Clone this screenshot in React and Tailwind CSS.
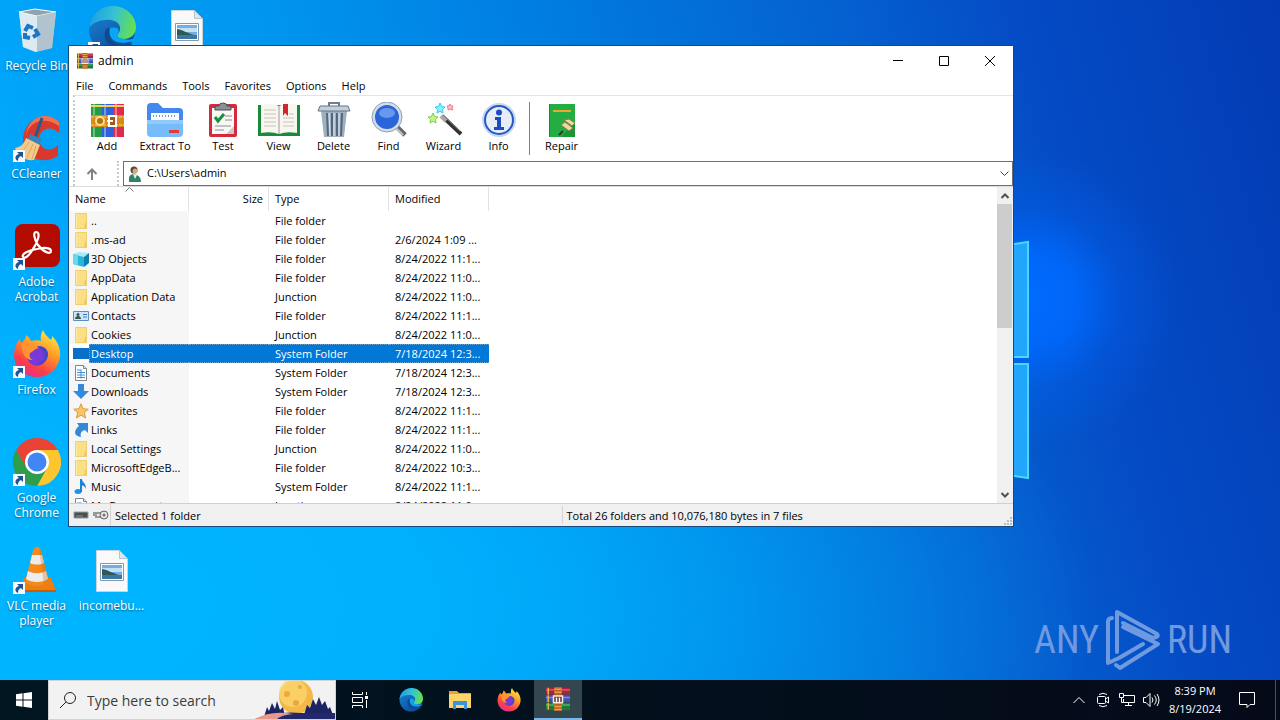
import React from 'react';

const files = [
  { name: '..', icon: 'folder', type: 'File folder', modified: '' },
  { name: '.ms-ad', icon: 'folder', type: 'File folder', modified: '2/6/2024 1:09 ...' },
  { name: '3D Objects', icon: 'cube', type: 'File folder', modified: '8/24/2022 11:1...' },
  { name: 'AppData', icon: 'folder', type: 'File folder', modified: '8/24/2022 11:0...' },
  { name: 'Application Data', icon: 'folder', type: 'Junction', modified: '8/24/2022 11:0...' },
  { name: 'Contacts', icon: 'contacts', type: 'File folder', modified: '8/24/2022 11:1...' },
  { name: 'Cookies', icon: 'folder', type: 'Junction', modified: '8/24/2022 11:0...' },
  { name: 'Desktop', icon: 'desktop', type: 'System Folder', modified: '7/18/2024 12:3...', selected: true },
  { name: 'Documents', icon: 'documents', type: 'System Folder', modified: '7/18/2024 12:3...' },
  { name: 'Downloads', icon: 'downloads', type: 'System Folder', modified: '7/18/2024 12:3...' },
  { name: 'Favorites', icon: 'favorites', type: 'File folder', modified: '8/24/2022 11:1...' },
  { name: 'Links', icon: 'links', type: 'File folder', modified: '8/24/2022 11:1...' },
  { name: 'Local Settings', icon: 'folder', type: 'Junction', modified: '8/24/2022 11:0...' },
  { name: 'MicrosoftEdgeB...', icon: 'folder', type: 'File folder', modified: '8/24/2022 10:3...' },
  { name: 'Music', icon: 'music', type: 'System Folder', modified: '8/24/2022 11:1...' },
  { name: 'My Documents', icon: 'documents', type: 'Junction', modified: '8/24/2022 11:0...' },
];

const menus = ['File', 'Commands', 'Tools', 'Favorites', 'Options', 'Help'];

/* ---------- Row icons ---------- */

const rowIcons = {
  folder: (
    <>
      <path d="M2 0h12v16H2z" fill="#fbdf84" />
      <path d="M2 0h2v16H2z" fill="#fdeaa6" />
      <path d="M12 10l2-1v7h-3z" fill="#efc65a" />
      <path d="M2.5.5h11v15h-11z" fill="none" stroke="#efcf70" />
    </>
  ),
  cube: (
    <>
      <path d="M0 3l6-2 10 1-5 4z" fill="#a5ebf5" />
      <path d="M0 3l11 3v10L0 13z" fill="#28b5d8" />
      <path d="M11 6l5-4v10l-5 4z" fill="#0b7fae" />
      <path d="M0 3l5 1v10l-5-1z" fill="#6bd8ea" />
    </>
  ),
  contacts: (
    <>
      <path d="M.5 3.500h15v9H.5z" fill="#cfe6fa" stroke="#5b8fc4" />
      <circle cx="5" cy="6.500" r="1.500" fill="#34564e" />
      <path d="M2 11c0-4 6-4 6 0z" fill="#34564e" />
      <path d="M10 6.500h4M10 9h4" stroke="#3a78bd" />
    </>
  ),
  desktop: <path d="M0 2h16v11H0z" fill="#0a6fc9" />,
  documents: (
    <>
      <path d="M2.500.5h8l3 3v12h-11z" fill="#fff" stroke="#7b8791" />
      <path d="M10.500.5v3h3" fill="#dde6ee" stroke="#7b8791" />
      <path d="M4 5h4M4 7.500h8M4 10h8M4 12.500h8" stroke="#3d8fd6" />
      <path d="M8 4.500v9" stroke="#3d8fd6" />
    </>
  ),
  downloads: <path d="M5 0h6v7h5l-8 8-8-8h5z" fill="#3389dc" />,
  favorites: (
    <path
      d="M8 .8l2 5 5.300.4-4 3.500 1.300 5.300L8 12.200 3.400 15l1.300-5.300-4-3.500L6 5.800z"
      fill="#fbc565"
      stroke="#dc9a3d"
    />
  ),
  links: <path d="M4 1h11v10l-3-3c-4 1-5 4-4 7-7-1-8-6-2-11z" fill="#3488d8" />,
  music: (
    <>
      <ellipse cx="5" cy="12.500" rx="3.500" ry="2.500" fill="#1a93ec" />
      <path d="M7 0h2c0 4 5 4 3.500 10C12 7 10 6.500 9 6.500V13H7z" fill="#1a83dc" />
    </>
  ),
};

const RowIcon = ({ kind }) => (
  <svg viewBox="0 0 16 16" className="w-4 h-4 shrink-0">
    {rowIcons[kind]}
  </svg>
);

/* ---------- Application icons ---------- */

const WinRarIcon = ({ className }) => (
  <svg viewBox="0 0 32 32" className={className}>
    <path d="M0 1h32v9H0z" fill="#a8233c" />
    <path d="M0 11h32v9H0z" fill="#4050b8" />
    <path d="M0 21h32v10H0z" fill="#1f7a35" />
    <path d="M0 4h32" stroke="#db5570" strokeWidth="2" />
    <path d="M0 14h32" stroke="#7a8ae4" strokeWidth="2" />
    <path d="M0 24h32" stroke="#4ab766" strokeWidth="2" />
    <path d="M3 1v30" stroke="#e4b440" strokeWidth="2" strokeDasharray="9 1" />
    <path d="M11 0h10v32H11z" fill="#b8602c" />
    <path d="M11 3h10M11 7h10M11 26h10M11 30h10" stroke="#e8a042" strokeWidth="2" />
    <path d="M10 12h12v9H10z" fill="#6b2a2a" stroke="#f5eee0" strokeWidth="2" />
    <path d="M14 14v6M18 14v6" stroke="#fff" strokeWidth="2" />
  </svg>
);

const EdgeIcon = ({ className }) => (
  <svg viewBox="0 0 48 48" className={className}>
    <defs>
      <linearGradient id="edgeTop" x1="0" y1="0.300" x2="1" y2="0.500">
        <stop offset="0" stopColor="#1b9ee4" />
        <stop offset="0.500" stopColor="#35c2d2" />
        <stop offset="1" stopColor="#66e04e" />
      </linearGradient>
      <linearGradient id="edgeLow" x1="0" y1="0" x2="0.600" y2="1">
        <stop offset="0" stopColor="#1a86d8" />
        <stop offset="1" stopColor="#0c4f9e" />
      </linearGradient>
    </defs>
    <circle cx="24" cy="24" r="23" fill="url(#edgeLow)" />
    <path
      d="M1 22C3 8 13 0 25 0c13 0 23 10 23 21 0 7-5 12-12 12-6 0-8-3-6-5 5-6 1-13-7-14C14 13 5 16 1 22z"
      fill="url(#edgeTop)"
    />
    <path d="M18 23c-4 9 2 20 15 20 5 0 9-2 12-6-7 4-25 4-23-12 1-3-2-4-4-2z" fill="#114a8b" />
    <path d="M22 22c-3 12 8 18 23 13l2-3c-3 2-8 2-11 1-6 0-8-3-6-5 2-4 0-8-8-6z" fill="#0aa6f6" />
  </svg>
);

const FirefoxIcon = ({ className }) => (
  <svg viewBox="0 0 48 48" className={className}>
    <defs>
      <linearGradient id="foxBody" x1="0.800" y1="0" x2="0.250" y2="1">
        <stop offset="0" stopColor="#fff04a" />
        <stop offset="0.400" stopColor="#ff9a26" />
        <stop offset="0.750" stopColor="#fb3f47" />
        <stop offset="1" stopColor="#e62a9a" />
      </linearGradient>
    </defs>
    <path
      d="M30 0c2 5 5 7 8 10 1-1 1-3 1-4 6 6 9 13 8 21-2 12-11 20-23 20C11 47 2 38 1 26c0-7 2-13 6-17 0 2 1 3 1 4 3-2 5-5 5-8 3 2 4 4 5 6 4-1 8-1 10 0-1-4 0-8 2-11z"
      fill="url(#foxBody)"
    />
    <circle cx="24" cy="26" r="10" fill="#7a38d8" />
    <path d="M9 14c6-3 13-1 17 4-5 1-6 4-9 5-1 3 0 6 3 7-5 1-12-5-11-16z" fill="#ff9430" />
    <path d="M24 17c4-2 10 1 11 6 1 7-6 13-13 11 8-1 11-7 8-12-1-3-3-4-6-5z" fill="#4a44c8" />
  </svg>
);

const RecycleIcon = () => (
  <svg viewBox="0 0 48 48" className="w-12 h-12">
    <path d="M6 6l16-3 21 3-4 36-17 4-12-5z" fill="#dbe7ee" opacity="0.850" />
    <path d="M6 6l18 4 19-4-21-3z" fill="#91a3ae" stroke="#f5fbff" />
    <path d="M24 10l19-4-4 36-15 4z" fill="#aebdc6" opacity="0.800" />
    <path d="M6 6l18 4v36l-14-5z" fill="#e6edf1" opacity="0.800" />
    <g fill="none" stroke="#1977c8" strokeWidth="4">
      <path d="M12 25l3-5 5 2M22 23l3 5-5 3M17 32l-5-1v-4" />
    </g>
  </svg>
);

const CCleanerIcon = () => (
  <svg viewBox="0 0 48 48" className="w-12 h-12">
    <path d="M46 8v11c-8-8-19-5-20 6 1 11 12 14 19 6v11C28 52 9 43 10 25 11 6 31-4 46 8z" fill="#d9392d" />
    <path d="M46 8v4C32 2 16 7 13 22 14 3 34-4 46 8z" fill="#ef7152" />
    <path d="M29 4l-7 20" stroke="#26598a" strokeWidth="3" />
    <path d="M17 20l12 5-4 8-12-4z" fill="#3c83ba" />
    <path d="M13 24l14 7-6 15C12 47 5 42 2 34c6-1 9-4 11-10z" fill="#f1ca8c" />
    <path d="M16 28l-8 12M20 30l-6 14M23 32l-4 13" stroke="#dda85c" />
  </svg>
);

const AcrobatIcon = () => (
  <svg viewBox="0 0 48 48" className="w-12 h-12">
    <rect x="2" y="2" width="45" height="43" rx="8" fill="#b30b00" />
    <path
      d="M23 10c5 0 2 10-3 17-4 7-8 10-10 8-2-3 6-7 14-8 8-2 14-1 14 2 0 4-8 1-13-6-4-6-5-13-2-13z"
      fill="none"
      stroke="#fff"
      strokeWidth="2.200"
    />
  </svg>
);

const ChromeIcon = () => (
  <svg viewBox="0 0 48 48" className="w-12 h-12">
    <path d="M24 12h20.800A24 24 0 0 1 24 48l10-18z" fill="#fcc62c" />
    <path d="M3.200 12L14 30l10 6 10-6-10 18A24 24 0 0 1 3.200 12z" fill="#2f9e4c" />
    <path d="M3.200 12L13 29l11-17h20.800A24 24 0 0 0 3.200 12z" fill="#ea4335" />
    <circle cx="24" cy="24" r="12" fill="#fff" />
    <circle cx="24" cy="24" r="9.500" fill="#4285f4" />
  </svg>
);

const VlcIcon = () => (
  <svg viewBox="0 0 48 48" className="w-12 h-12">
    <path d="M11 32h27l5 13H6z" fill="#ee7d12" />
    <path d="M6 44h37v2H6z" fill="#c95d05" />
    <path d="M24 1c2 0 3 1 4 4l8 31c-3 5-21 5-24 0l8-31c1-3 2-4 4-4z" fill="#f58a1a" />
    <path d="M19 9h10l2 8c-4 2-10 2-14 0z" fill="#ececec" />
    <path d="M15 25c6 3 12 3 18 0l2 8c-5 4-17 4-22 0z" fill="#ececec" />
    <path d="M28 5l8 31-5 3-5-36z" fill="#c9630c" opacity="0.300" />
  </svg>
);

const PictureFileIcon = () => (
  <svg viewBox="0 0 48 48" className="w-12 h-12">
    <path d="M8.500 4.500h23l8 8v33h-31z" fill="#f9f9f9" stroke="#c9d3da" />
    <path d="M31.500 4.500v8h8z" fill="#dbe6ee" stroke="#b4c3cf" />
    <path d="M12.500 17.500h23v17h-23z" fill="#fff" stroke="#8698ad" />
    <path d="M14 19h20v14H14z" fill="#71aee6" />
    <path d="M14 22h20v4H14z" fill="#c5e0f2" />
    <path d="M14 23c6 1 10 4 17 6H14z" fill="#2d5a58" />
    <path d="M14 29h20v4H14z" fill="#3a78a4" />
  </svg>
);

const ShortcutArrow = () => (
  <svg viewBox="0 0 12 12" className="absolute left-0 bottom-0 w-3 h-3">
    <path d="M0 0h12v12H0z" fill="#f7fafc" />
    <path d="M4 2h6v6L8 6c-2 1-3 2-3 5C1 9 2 5 6 4z" fill="#1f5490" />
  </svg>
);

/* ---------- Toolbar icons ---------- */

const AddIcon = () => (
  <svg viewBox="0 0 36 36" className="w-9 h-9">
    <path d="M2 2h11v33H2z" fill="#239a44" />
    <path d="M13 2h11v33H13z" fill="#2f62d8" />
    <path d="M24 2h11v33H24z" fill="#e02c4c" />
    <path d="M5 2v33M16 2v33M27 2v33" stroke="#fff" strokeWidth="2" opacity="0.350" />
    <path d="M2 4h33" stroke="#f3d25c" strokeWidth="2" />
    <path d="M2 13h33v12H2z" fill="#d68b1c" />
    <path d="M2 15h33M2 23h33" stroke="#ffd56b" strokeDasharray="3 1" />
    <circle cx="11" cy="19" r="4" fill="#b86f10" stroke="#ffe08a" strokeWidth="2" />
    <path d="M20 14h7v10h-7z" fill="#a3581c" stroke="#fff" strokeWidth="2" />
    <path d="M18 19h6" stroke="#fff" strokeWidth="2" />
  </svg>
);

const ExtractIcon = () => (
  <svg viewBox="0 0 36 36" className="w-9 h-9">
    <path d="M0 5q0-4 4-4h7l5 5h16q4 0 4 4v12H0z" fill="#4387f0" />
    <path d="M4 11h28v10H4z" fill="#fafdff" />
    <path d="M6 14h24" stroke="#7c96b5" strokeWidth="2" strokeDasharray="1 2" />
    <path d="M0 18h36v13q0 4-4 4H4q-4 0-4-4z" fill="#77bcfa" />
    <path d="M0 20h36" stroke="#a9dbff" strokeWidth="4" opacity="0.500" />
    <path d="M22 28h10v3H22z" fill="#e23b30" />
  </svg>
);

const TestIcon = () => (
  <svg viewBox="0 0 36 36" className="w-9 h-9">
    <rect x="4" y="2" width="28" height="33" rx="2" fill="#d42a3c" />
    <path d="M7 6h22v26H7z" fill="#faf8f4" />
    <path d="M10 8V4h4q0-3 4-3t4 3h4v4z" fill="#8b8f96" stroke="#4b4f55" />
    <path d="M10 15l3 4 6-7" fill="none" stroke="#1d8d42" strokeWidth="3" />
    <path d="M20 14h7M20 18h7M10 24h16M10 28h9" stroke="#8a8e93" />
    <path d="M29 24v8h-8z" fill="#c9c9c9" />
  </svg>
);

const ViewIcon = () => (
  <svg viewBox="0 0 44 36" className="w-11 h-9">
    <path d="M1 3h42v31H1z" fill="#188a3c" />
    <path d="M4 3q10-3 18 1 8-4 18-1v28q-10-2-18 1-8-3-18-1z" fill="#f8f6ef" />
    <path d="M22 4v28" stroke="#9c9c94" />
    <path d="M7 8h12M7 12h12M7 16h12M7 20h12M7 24h12M32 12h5M26 16h11M26 20h11M26 24h11" stroke="#c6c5be" />
    <path d="M26 2h5v12l-3-3-2 3z" fill="#d5232f" />
  </svg>
);

const DeleteIcon = () => (
  <svg viewBox="0 0 36 36" className="w-9 h-9">
    <path d="M13 4V1h10v3" fill="none" stroke="#6f7d8c" strokeWidth="2" />
    <path d="M5 9h26l-3 26H8z" fill="#9eafc0" />
    <path d="M11 11l1 23M16 11v23M21 11v23M26 11l-1 23" stroke="#53687d" strokeWidth="2" />
    <path d="M13 11l1 23M18 11v23M23 11v23" stroke="#e3ecf3" />
    <path d="M4 4h28l2 5H2z" fill="#c3cfda" stroke="#64768a" />
  </svg>
);

const FindIcon = () => (
  <svg viewBox="0 0 36 36" className="w-9 h-9">
    <path d="M25 24l9 9" stroke="#66696e" strokeWidth="5" />
    <path d="M24 25l8 8" stroke="#c2c5ca" strokeWidth="2" />
    <circle cx="16" cy="15" r="13.500" fill="#2a65d9" stroke="#d4dde8" strokeWidth="3" />
    <circle cx="16" cy="15" r="15" fill="none" stroke="#8b9fba" />
    <ellipse cx="16" cy="11" rx="8" ry="5" fill="#8fbdfa" opacity="0.600" />
  </svg>
);

const star = 'M5 0l1.500 3.500 3.500.5-2.500 2.500.5 3.500-3-1.700L2 10l.5-3.500L0 4l3.500-.5z';

const WizardIcon = () => (
  <svg viewBox="0 0 36 36" className="w-9 h-9">
    <path d="M16 14l19 18" stroke="#333" strokeWidth="4" />
    <path d="M15 14l5 5" stroke="#a6a8aa" strokeWidth="4" />
    <path d="M18 14l16 15" stroke="#8a8a8a" />
    <path d={star} fill="#8af0ff" stroke="#32c9ec" transform="translate(9 1)" />
    <path d={star} fill="#c3f28b" stroke="#80cf46" transform="translate(2 11)" />
    <path d="M24 2l1 2h2l-1 2 1 2-3-1-2 1v-2l-1-2h2z" fill="#ffc4ca" stroke="#ef7a86" />
  </svg>
);

const InfoIcon = () => (
  <svg viewBox="0 0 36 36" className="w-9 h-9">
    <circle cx="18" cy="18" r="17" fill="#c6d8f2" />
    <circle cx="18" cy="18" r="14" fill="#e6edf6" stroke="#2459c4" strokeWidth="2" />
    <circle cx="18" cy="10.500" r="3" fill="#1c4bc4" />
    <path d="M14 15h6v10h3v3H13v-3h3v-7h-2z" fill="#1c4bc4" />
  </svg>
);

const RepairIcon = () => (
  <svg viewBox="0 0 36 36" className="w-9 h-9">
    <path d="M5 2h26v33H5z" fill="#24ad42" />
    <path d="M5 2h1v33H5z" fill="#188a30" />
    <path d="M9 9h18" stroke="#f2a52c" strokeWidth="2" />
    <path d="M17 35l14-15v15z" fill="#1a9636" />
    <path d="M17 23l8 6 4-3-8-6zM20 18l8 6 3-3-6-4z" fill="#ead9a2" stroke="#8f7c44" />
    <path d="M15 33l4-4" stroke="#333" strokeWidth="2" />
  </svg>
);

const tools = [
  { label: 'Add', icon: <AddIcon />, width: 'w-14' },
  { label: 'Extract To', icon: <ExtractIcon />, width: 'w-[60px]' },
  { label: 'Test', icon: <TestIcon />, width: 'w-14' },
  { label: 'View', icon: <ViewIcon />, width: 'w-[55px]' },
  { label: 'Delete', icon: <DeleteIcon />, width: 'w-[55px]' },
  { label: 'Find', icon: <FindIcon />, width: 'w-[55px]' },
  { label: 'Wizard', icon: <WizardIcon />, width: 'w-[55px]' },
  { label: 'Info', icon: <InfoIcon />, width: 'w-[55px]' },
];

const ToolButton = ({ tool }) => (
  <button className={`${tool.width} flex flex-col items-center whitespace-nowrap`}>
    {tool.icon}
    <span className="leading-4">{tool.label}</span>
  </button>
);

/* ---------- Desktop ---------- */

const shortcuts = [
  { label: 'Recycle Bin', icon: <RecycleIcon />, place: 'col-start-1 row-start-1' },
  { label: 'CCleaner', icon: <CCleanerIcon />, place: 'col-start-1 row-start-2', link: true },
  { label: 'Adobe Acrobat', icon: <AcrobatIcon />, place: 'col-start-1 row-start-3', link: true },
  { label: 'Firefox', icon: <FirefoxIcon className="w-12 h-12" />, place: 'col-start-1 row-start-4', link: true },
  { label: 'Google Chrome', icon: <ChromeIcon />, place: 'col-start-1 row-start-5', link: true },
  { label: 'VLC media player', icon: <VlcIcon />, place: 'col-start-1 row-start-6', link: true },
  { label: '', icon: <EdgeIcon className="w-12 h-12" />, place: 'col-start-2 row-start-1', link: true },
  { label: 'incomebu...', icon: <PictureFileIcon />, place: 'col-start-2 row-start-6' },
  { label: '', icon: <PictureFileIcon />, place: 'col-start-3 row-start-1' },
];

const Shortcut = ({ item }) => (
  <button className={`${item.place} flex flex-col items-center pr-[2px] text-white`}>
    <span className="relative">
      {item.icon}
      {item.link && <ShortcutArrow />}
    </span>
    <span className="mt-1 px-1 text-[12px] leading-[15px] [text-shadow:0_1px_2px_rgba(0,0,0,0.5)]">
      {item.label}
    </span>
  </button>
);

const Wallpaper = () => (
  <div className="absolute inset-0 overflow-hidden bg-[linear-gradient(75deg,#00b2ff_0%,#00a4f9_13%,#0096ef_30%,#007ce0_50%,#0560d0_70%,#044bc5_82%,#033bb3_100%)]">
    <div className="absolute inset-0 bg-[radial-gradient(ellipse_1050px_420px_at_50px_600px,#00b4ff_0%,#00b4ffe6_35%,#00b4ff66_70%,transparent_100%)]" />
    <div className="absolute inset-0 bg-[radial-gradient(circle_at_1030px_300px,#006cff_0%,#0066f8_45px,#0066f855_90px,transparent_150px)]" />
    <svg viewBox="0 0 230 240" className="absolute left-[800px] top-[240px] w-[230px] h-60">
      <path d="M0 34L228 2v115H0zM0 124h228v114L0 206z" fill="#22a6fb" stroke="#48d8ff" strokeWidth="2" />
    </svg>
  </div>
);

const Watermark = () => (
  <div className="absolute right-12 bottom-2 h-16 flex items-center gap-1.5 text-[#6f9ae0] font-['Liberation_Sans_Narrow','Roboto_Condensed','Roboto',sans-serif] text-[38px] leading-none">
    <span>ANY</span>
    <svg viewBox="0 0 56 62" className="w-14 h-[62px]" fill="none" stroke="currentColor" strokeWidth="4" strokeLinejoin="round" strokeLinecap="round">
      <path d="M7 9q-4 0-4 4v41l11-5 24-14" />
      <path d="M12 43V3l40 22q2 2-1 3l-3 1-30-15" />
      <path d="M18 18l35 17-38 24-4-3" />
    </svg>
    <span>RUN</span>
  </div>
);

/* ---------- Archive window ---------- */

const TitleBar = () => (
  <div className="h-[30px] flex items-center pl-2">
    <WinRarIcon className="w-4 h-4" />
    <span className="pl-[5px] flex-1 text-[12px]">admin</span>
    <button aria-label="Minimize" className="w-[46px] h-full flex items-center justify-center">
      <svg viewBox="0 0 10 10" className="w-[10px] h-[10px]">
        <path d="M0 4.500h10" stroke="#000" />
      </svg>
    </button>
    <button aria-label="Maximize" className="w-[46px] h-full flex items-center justify-center">
      <svg viewBox="0 0 10 10" className="w-[10px] h-[10px]">
        <path d="M.5.5h9v9h-9z" fill="none" stroke="#000" />
      </svg>
    </button>
    <button aria-label="Close" className="w-[46px] h-full flex items-center justify-center">
      <svg viewBox="0 0 10 10" className="w-[10px] h-[10px]">
        <path d="M0 0l10 10M10 0L0 10" stroke="#000" />
      </svg>
    </button>
  </div>
);

const AddressBar = () => (
  <div className="h-[25px] flex">
    <button aria-label="Up one level" className="w-[42px] h-full flex items-center justify-center pr-2">
      <svg viewBox="0 0 12 12" className="w-3 h-3">
        <path d="M6 12V2M1.500 6L6 1.500 10.500 6" fill="none" stroke="#808080" strokeWidth="2" />
      </svg>
    </button>
    <div className="h-full border-l-2 border-dotted border-[#c8c8c8]" />
    <div className="ml-1 flex-1 h-full flex items-center border border-[#6f6f6f] pl-1">
      <svg viewBox="0 0 14 16" className="w-[14px] h-4">
        <circle cx="6" cy="4" r="3.500" fill="#5b4636" />
        <circle cx="7" cy="5" r="2.500" fill="#d9a77f" />
        <path d="M1 16V12q0-3 4-4l4 1q4 2 4 7z" fill="#2f8365" />
        <path d="M5 8l2 5 2-4z" fill="#e8f4ee" />
      </svg>
      <input
        aria-label="Address"
        defaultValue="C:\Users\admin"
        className="flex-1 min-w-0 pl-[5px] bg-transparent outline-none"
      />
      <button aria-label="Show history" className="w-4 h-full flex items-center justify-center">
        <svg viewBox="0 0 9 6" className="w-[9px] h-[6px]">
          <path d="M.5.5l4 4 4-4" fill="none" stroke="#444" />
        </svg>
      </button>
    </div>
  </div>
);

const FileList = () => (
  <div className="flex-1 min-h-0 flex border-t border-[#dcdcdc]">
    <div className="flex-1 overflow-hidden">
      <table className="table-fixed w-[420px] border-separate border-spacing-0 text-left">
        <thead>
          <tr className="h-6">
            <th className="relative w-[120px] p-0 pl-[6px] font-normal border-r border-[#e2e2e2]">
              Name
              <svg viewBox="0 0 9 5" className="absolute left-14 top-0 w-[9px] h-[5px]">
                <path d="M.5 4.500l4-4 4 4" fill="none" stroke="#777" />
              </svg>
            </th>
            <th className="w-20 p-0 pr-[5px] font-normal text-right border-r border-[#e2e2e2]">Size</th>
            <th className="w-[120px] p-0 pl-[6px] font-normal border-r border-[#e2e2e2]">Type</th>
            <th className="w-[100px] p-0 pl-[6px] font-normal border-r border-[#e2e2e2]">Modified</th>
          </tr>
        </thead>
        <tbody>
          {files.map((file) => {
            const cell = file.selected
              ? 'bg-[#0078d7] text-white border-y border-dotted border-[#6aa5d4]'
              : '';
            return (
              <tr key={file.name} className="h-[19px] leading-[17px] whitespace-nowrap">
                <td className={`p-0 ${file.selected ? '' : 'bg-[#f6f6f6]'}`}>
                  <div className="h-[19px] flex items-center pl-1">
                    <RowIcon kind={file.icon} />
                    <span
                      className={`flex-1 h-[19px] flex items-center ${cell} ${
                        file.selected ? 'border-l pl-px' : 'pl-[2px]'
                      }`}
                    >
                      {file.name}
                    </span>
                  </div>
                </td>
                <td className={`p-0 ${cell}`}></td>
                <td className={`p-0 pl-[6px] ${cell}`}>{file.type}</td>
                <td className={`p-0 pl-[6px] ${cell}`}>{file.modified}</td>
              </tr>
            );
          })}
        </tbody>
      </table>
    </div>
    {/* Scrollbar */}
    <div className="w-4 flex flex-col bg-[#f0f0f0]">
      <button aria-label="Scroll up" className="h-[17px] flex items-center justify-center">
        <svg viewBox="0 0 8 6" className="w-2 h-[6px]">
          <path d="M.5 5l3.500-3.500L7.500 5" fill="none" stroke="#505050" strokeWidth="2" />
        </svg>
      </button>
      <div className="flex-1 pr-px">
        <div className="h-[44%] bg-[#cdcdcd]" />
      </div>
      <button aria-label="Scroll down" className="h-[17px] flex items-center justify-center">
        <svg viewBox="0 0 8 6" className="w-2 h-[6px]">
          <path d="M.5 1L4 4.500 7.500 1" fill="none" stroke="#505050" strokeWidth="2" />
        </svg>
      </button>
    </div>
  </div>
);

const StatusBar = () => (
  <div className="h-[23px] flex items-center bg-[#f0f0f0] border-t border-[#d0d0d0]">
    <div className="w-[42px] h-full flex items-center gap-1 pl-1 border-r border-[#d5d5d5]">
      <svg viewBox="0 0 16 10" className="w-4 h-[10px]">
        <path d="M1 2h14v6H1z" fill="#4a4e52" stroke="#9aa0a5" />
        <path d="M3 6h7" stroke="#8d9398" />
      </svg>
      <svg viewBox="0 0 16 10" className="w-4 h-[10px]">
        <path d="M9 3H1v2h2v2h5" fill="none" stroke="#999" strokeWidth="2" />
        <circle cx="11" cy="5" r="4" fill="#e3e3e3" stroke="#666" />
        <circle cx="11" cy="5" r="1.500" fill="#777" />
      </svg>
    </div>
    <div className="flex-1 pl-1 pt-0.5 border-r border-[#d5d5d5]">Selected 1 folder</div>
    <div className="flex-1 pl-1 h-full flex items-center justify-between">
      <span className="pt-0.5">Total 26 folders and 10,076,180 bytes in 7 files</span>
      <svg viewBox="0 0 10 10" className="w-[10px] h-[10px] self-end">
        <path
          d="M7 1h2v2H7zM4 4h2v2H4zM7 4h2v2H7zM1 7h2v2H1zM4 7h2v2H4zM7 7h2v2H7z"
          fill="#bdbdbd"
        />
      </svg>
    </div>
  </div>
);

const ArchiveWindow = () => (
  <div className="absolute left-[68px] top-[45px] w-[946px] h-[482px] flex flex-col bg-white border border-[#17497c] text-black text-[11px]">
    <TitleBar />
    <nav className="h-[19px] flex items-center gap-[15px] pl-[7px] pt-0.5">
      {menus.map((menu) => (
        <button key={menu}>{menu}</button>
      ))}
    </nav>
    <div className="ml-1 border-t border-[#e4e4e4] border-l-2 border-l-[#c8c8c8] [border-left-style:dotted]">
      <div className="h-[65px] flex items-start pl-1 pt-[6px]">
        {tools.map((tool) => (
          <ToolButton key={tool.label} tool={tool} />
        ))}
        <div className="w-px h-[53px] ml-[3px] mr-1 bg-[#808080]" />
        <ToolButton tool={{ label: 'Repair', icon: <RepairIcon />, width: 'w-[55px]' }} />
      </div>
      <AddressBar />
    </div>
    <FileList />
    <StatusBar />
  </div>
);

/* ---------- Taskbar ---------- */

const SearchBox = () => (
  <label className="w-72 h-full flex items-center bg-[#f2f2f2] border border-[#cfd3d6] pl-[10px]">
    <svg viewBox="0 0 18 18" className="w-[18px] h-[18px]" fill="none" stroke="#222">
      <circle cx="11" cy="7" r="5.500" />
      <path d="M7 11l-6 6" />
    </svg>
    <input
      aria-label="Search"
      placeholder="Type here to search"
      className="flex-1 min-w-0 pl-[10px] bg-transparent outline-none text-[14px] placeholder:text-[#3c3c3c]"
    />
    <svg viewBox="0 0 80 38" className="w-20 h-full">
      <circle cx="41" cy="16" r="17" fill="#f3b848" />
      <circle cx="38" cy="12" r="14" fill="#fbd873" opacity="0.700" />
      <circle cx="32" cy="13" r="3" fill="#eda83c" />
      <circle cx="45" cy="6" r="2" fill="#eda83c" />
      <circle cx="41" cy="22" r="3" fill="#eda83c" />
      <path
        d="M9 36l3-10 2 4 3-8 3 6 2-8 3 9 3-3 2 10zM49 34l3-10 3 3 3-9 3 6 3-8 3 8 3-4 3 8 2-2 3 8z"
        fill="#1c2463"
      />
      <path d="M0 38q20-8 46-6h34v6z" fill="#23286d" />
      <path d="M0 38q16-9 38-5-12 1-16 5z" fill="#e79a8c" />
    </svg>
  </label>
);

const TaskButton = ({ label, active, children }) => (
  <button
    aria-label={label}
    className={`w-12 h-full flex items-center justify-center ${
      active ? 'bg-[#34464f] border-b-2 border-[#76b9ed]' : ''
    }`}
  >
    {children}
  </button>
);

const Taskbar = () => (
  <div className="h-10 flex items-center bg-linear-to-r from-[#001620] to-[#050a19] text-white">
    <TaskButton label="Start">
      <svg viewBox="0 0 16 16" className="w-4 h-4" fill="#fff">
        <path d="M0 2.200l6.500-.9v6.200H0zM7.500 1.200L16 0v7.500H7.500zM0 8.500h6.500v6.200L0 13.800zM7.500 8.500H16V16l-8.500-1.200z" />
      </svg>
    </TaskButton>
    <SearchBox />
    <div className="h-full flex gap-px">
      <TaskButton label="Task View">
        <svg viewBox="0 0 16 16" className="w-4 h-4" fill="none" stroke="#fff">
          <path d="M.5 0v2.500h10V0M.5 5.500h10v5H.5zM.5 16v-2.500h10V16M14.500 0v3M14.500 8v8" />
          <path d="M13 4h3v3h-3z" fill="#fff" stroke="none" />
        </svg>
      </TaskButton>
      <div className="w-px" />
      <TaskButton label="Edge">
        <EdgeIcon className="w-6 h-6" />
      </TaskButton>
      <TaskButton label="File Explorer">
        <svg viewBox="0 0 22 20" className="w-[22px] h-5">
          <path d="M0 1h8l2 2h12v3H0z" fill="#e8a33a" />
          <path d="M0 4h22v14H0z" fill="#fbd56a" />
          <path d="M4 19v-8h14v8h-3v-4H7v4z" fill="#3c94d8" />
        </svg>
      </TaskButton>
      <TaskButton label="Firefox">
        <FirefoxIcon className="w-6 h-6" />
      </TaskButton>
      <TaskButton label="WinRAR" active>
        <WinRarIcon className="w-6 h-6" />
      </TaskButton>
    </div>
    {/* Tray */}
    <div className="ml-auto h-full flex items-center">
      <button aria-label="Show hidden icons" className="w-6 flex justify-center">
        <svg viewBox="0 0 12 8" className="w-3 h-2" fill="none" stroke="#fff">
          <path d="M.5 7L6 1.500 11.500 7" />
        </svg>
      </button>
      <button aria-label="Meet Now" className="w-6 flex justify-center">
        <svg viewBox="0 0 16 16" className="w-4 h-4" fill="none" stroke="#fff">
          <rect x="2.500" y="4.500" width="8" height="7" rx="1" />
          <path d="M10.500 7l3-2v6l-3-2M4 2.500q4-2.500 8 0M4 13.500q4 2.500 8 0" />
        </svg>
      </button>
      <button aria-label="Network" className="w-6 flex justify-center">
        <svg viewBox="0 0 16 16" className="w-4 h-4" fill="none" stroke="#fff">
          <path d="M5 3.500h10.500v7H4.500V7M9.500 10.500v3M6 13.500h7M.5 1.500h4v4h-4zM2.500 5.500v5h2" />
        </svg>
      </button>
      <button aria-label="Volume" className="w-6 flex justify-center">
        <svg viewBox="0 0 17 16" className="w-[17px] h-4" fill="none" stroke="#fff">
          <path d="M.5 5.500H3l4-4v13l-4-4H.5zM9 5.500q2 2.500 0 5M11.500 3.500q3.500 4.500 0 9M14 2q4 6 0 12" />
        </svg>
      </button>
      <div className="ml-1 w-14 text-center text-[11px] leading-[18px]">
        <div>8:39 PM</div>
        <div>8/19/2024</div>
      </div>
      <button aria-label="Notifications" className="w-12 flex justify-center">
        <svg viewBox="0 0 16 16" className="w-4 h-4" fill="none" stroke="#fff">
          <path d="M.5.5h15v12H11l-3 3v-3H.5z" />
        </svg>
      </button>
      <div className="w-[9px] h-full flex justify-end pr-1">
        <div className="w-px h-full bg-[#4a5260]" />
      </div>
    </div>
  </div>
);

export default function App() {
  return (
    <div className="h-screen flex flex-col overflow-hidden font-['Open_Sans','Noto_Sans',sans-serif]">
      <main className="relative flex-1 min-h-0">
        <Wallpaper />
        <div className="relative grid w-max grid-cols-[75px_75px_75px] grid-rows-[repeat(6,108px)] pt-[6px]">
          {shortcuts.map((item) => (
            <Shortcut key={item.place} item={item} />
          ))}
        </div>
        <Watermark />
        <ArchiveWindow />
      </main>
      <Taskbar />
    </div>
  );
}
